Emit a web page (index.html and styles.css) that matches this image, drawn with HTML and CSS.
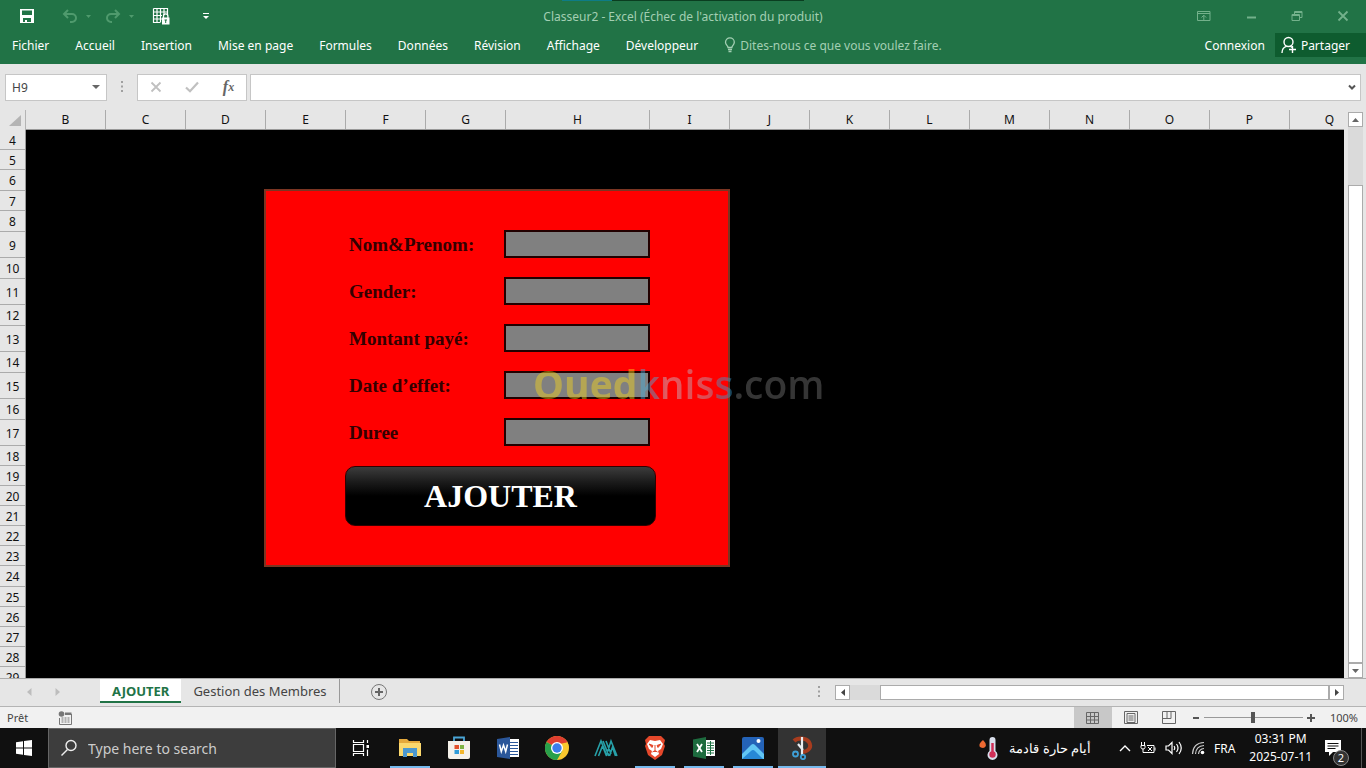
FILE: index.html
```
<!DOCTYPE html>
<html lang="fr">
<head>
    <meta charset="UTF-8">
    <meta name="viewport" content="width=device-width, initial-scale=1.0">
    <title>Classeur2 - Excel</title>
    <link rel="stylesheet" href="styles.css">
</head>
<body>
    <header class="titlebar">
        <div class="quick-access">
            <button class="save" aria-label="Enregistrer">
                <svg width="16" height="16" viewBox="0 0 16 16"><path fill="#fff" fill-rule="evenodd" d="M1 1h14v14H1zM3 2.500v4.500h10V2.500zM4 10v4h2v-2h2v2h4v-4z"/></svg>
            </button>
            <button class="undo" aria-label="Annuler">
                <svg width="30" height="16" viewBox="0 0 30 16"><path d="M6 2L2 6l4 4M2 6h8a3.500 3.500 0 0 1 0 8H8" fill="none" stroke="#4f9a6d" stroke-width="2"/><path d="M24 7h5l-2.500 3z" fill="#4f9a6d"/></svg>
            </button>
            <button class="redo" aria-label="Rétablir">
                <svg width="30" height="16" viewBox="0 0 30 16"><path d="M10 2l4 4-4 4M14 6H6a3.500 3.500 0 0 0 0 8h1" fill="none" stroke="#4f9a6d" stroke-width="2"/><path d="M24 7h5l-2.500 3z" fill="#4f9a6d"/></svg>
            </button>
            <button class="protect" aria-label="Protéger la feuille">
                <svg width="18" height="18" viewBox="0 0 18 18"><path d="M1.500 1.500h14v6M1.500 1.500v14h7M5 1v14M8.500 1v14M12 1v7M1 5h15M1 8.500h9M1 12h9" fill="none" stroke="#fff" stroke-width="1.200"/><rect x="10" y="10.500" width="7.500" height="7" fill="#fff"/><path d="M11.500 11V9a2.200 2.200 0 0 1 4.400 0v2" fill="none" stroke="#fff" stroke-width="1.300"/><path d="M12.500 13h2.500M13.700 13v3" stroke="#217346"/></svg>
            </button>
            <button class="customize" aria-label="Personnaliser">
                <svg width="8" height="8" viewBox="0 0 8 8"><path d="M1 1.500h6" stroke="#fff"/><path d="M1 4h6L4 7z" fill="#fff"/></svg>
            </button>
        </div>
        <h1 class="doc-title">Classeur2 - Excel (Échec de l'activation du produit)</h1>
        <div class="window-buttons">
            <button aria-label="Options du ruban">
                <svg width="14" height="12" viewBox="0 0 14 12"><path d="M.5 1.500h12.500v9H.5zM.5 3.500h12.500M6.800 10V5.500M4.500 7.500l2.300-2.300 2.300 2.300" fill="none" stroke="#73b18b"/></svg>
            </button>
            <button aria-label="Réduire">
                <svg width="12" height="12" viewBox="0 0 12 12"><path d="M2 7.500h9" stroke="#73b18b" stroke-width="2"/></svg>
            </button>
            <button aria-label="Restaurer">
                <svg width="12" height="12" viewBox="0 0 12 12"><path d="M1 4.500h7.500v6H1zM1 5.500h7.500M3.500 4V1.500H11v6H9M3.500 2.500H11" fill="none" stroke="#73b18b"/></svg>
            </button>
            <button aria-label="Fermer">
                <svg width="12" height="12" viewBox="0 0 12 12"><path d="M1.500 1.500l9 9M10.500 1.500l-9 9" stroke="#73b18b" stroke-width="1.800"/></svg>
            </button>
        </div>
    </header>

    <nav class="ribbon">
        <a href="#">Fichier</a>
        <a href="#">Accueil</a>
        <a href="#">Insertion</a>
        <a href="#">Mise en page</a>
        <a href="#">Formules</a>
        <a href="#">Données</a>
        <a href="#">Révision</a>
        <a href="#">Affichage</a>
        <a href="#">Développeur</a>
        <a href="#" class="tell-me">
            <svg width="12" height="16" viewBox="0 0 12 16"><path d="M4 10.500C4 8.500 1.500 8 1.500 5.200a4.400 4.400 0 0 1 8.800 0C10.300 8 7.900 8.500 7.900 10.500zM4 12.500h4M4.500 14.500h3" fill="none" stroke="#a3cfb3" stroke-width="1.300"/></svg>
            Dites-nous ce que vous voulez faire.
        </a>
        <a href="#" class="login">Connexion</a>
        <button class="share">
            <svg width="16" height="18" viewBox="0 0 16 18"><circle cx="7.500" cy="6" r="4.500" fill="none" stroke="#fff" stroke-width="1.400"/><path d="M1 17c0-4 2-6 4.500-6.700M9 10l2 1.500M8 13.500h7M11.500 10v7" fill="none" stroke="#fff" stroke-width="1.400"/></svg>
            Partager
        </button>
    </nav>

    <div class="formula-bar">
        <div class="name-box">
            <select aria-label="Zone Nom"><option>H9</option></select>
        </div>
        <svg class="dots" width="4" height="14" viewBox="0 0 4 14"><path d="M1 2h2M1 6.500h2M1 11h2" stroke="#a0a0a0" stroke-width="2"/></svg>
        <div class="formula-buttons">
            <button aria-label="Annuler la saisie">
                <svg width="12" height="12" viewBox="0 0 12 12"><path d="M1.500 1.500l9 9M10.500 1.500l-9 9" stroke="#c0c0c0" stroke-width="1.800"/></svg>
            </button>
            <button aria-label="Entrer">
                <svg width="14" height="12" viewBox="0 0 14 12"><path d="M1 6.500l4 3.800L13 1.500" fill="none" stroke="#c0c0c0" stroke-width="2.200"/></svg>
            </button>
            <button class="fx" aria-label="Insérer une fonction">f<sub>x</sub></button>
        </div>
        <div class="formula-input">
            <input type="text" aria-label="Barre de formule">
            <svg width="8" height="7" viewBox="0 0 8 7"><path d="M1 1.500l3 3 3-3" fill="none" stroke="#555" stroke-width="2"/></svg>
        </div>
    </div>

    <main class="workbook">
        <div class="corner"><svg width="13" height="12" viewBox="0 0 13 12"><path d="M12 0v11H0z" fill="#b4b4b4"/></svg></div>
        <div class="columns">
            <span>B</span><span>C</span><span>D</span><span>E</span><span>F</span><span>G</span><span class="wide">H</span><span>I</span><span>J</span><span>K</span><span>L</span><span>M</span><span>N</span><span>O</span><span>P</span><span>Q</span>
        </div>
        <div class="rows">
            <span>4</span><span>5</span><span class="mid">6</span><span>7</span><span class="mid">8</span><span class="tall">9</span><span class="mid">10</span><span class="tall">11</span><span class="mid">12</span><span class="tall">13</span><span class="mid">14</span><span class="tall">15</span><span class="mid">16</span><span class="tall">17</span><span>18</span><span>19</span><span>20</span><span>21</span><span>22</span><span>23</span><span class="mid">24</span><span>25</span><span>26</span><span>27</span><span>28</span><span>29</span>
        </div>
        <div class="cells">
            <form class="member-form">
                <label for="nom">Nom&amp;Prenom:</label>
                <input type="text" id="nom">
                <label for="gender">Gender:</label>
                <input type="text" id="gender">
                <label for="montant">Montant payé:</label>
                <input type="text" id="montant">
                <label for="date">Date d’effet:</label>
                <input type="text" id="date">
                <label for="duree">Duree</label>
                <input type="text" id="duree">
                <button type="button" class="add">AJOUTER</button>
            </form>
            <div class="watermark"><span class="oued">Oued</span><span class="kniss">kniss</span><span class="com">.com</span></div>
        </div>
        <div class="v-scroll">
            <button class="arrow" aria-label="Haut"><svg width="7" height="4" viewBox="0 0 7 4"><path d="M0 4h7L3.500 0z" fill="#666"/></svg></button>
            <div class="v-track"></div>
            <div class="v-thumb"></div>
            <button class="arrow" aria-label="Bas"><svg width="7" height="4" viewBox="0 0 7 4"><path d="M0 0h7L3.500 4z" fill="#666"/></svg></button>
        </div>
    </main>

    <div class="sheet-bar">
        <button class="prev" aria-label="Feuille précédente"><svg width="5" height="8" viewBox="0 0 5 8"><path d="M4.500 0v8L0 4z" fill="#bdbdbd"/></svg></button>
        <button class="next" aria-label="Feuille suivante"><svg width="5" height="8" viewBox="0 0 5 8"><path d="M.5 0v8L5 4z" fill="#bdbdbd"/></svg></button>
        <a href="#" class="sheet active">AJOUTER</a>
        <a href="#" class="sheet">Gestion des Membres</a>
        <button class="new-sheet" aria-label="Nouvelle feuille"><svg width="18" height="18" viewBox="0 0 18 18"><circle cx="9" cy="9" r="7.500" fill="none" stroke="#777"/><path d="M5 9h8M9 5v8" stroke="#666" stroke-width="2"/></svg></button>
        <div class="h-scroll">
            <svg class="dots" width="4" height="14" viewBox="0 0 4 14"><path d="M1 2h2M1 6.500h2M1 11h2" stroke="#a0a0a0" stroke-width="2"/></svg>
            <button class="arrow" aria-label="Gauche"><svg width="4" height="7" viewBox="0 0 4 7"><path d="M4 0v7L0 3.500z" fill="#444"/></svg></button>
            <div class="h-track"></div>
            <div class="h-thumb"></div>
            <button class="arrow" aria-label="Droite"><svg width="4" height="7" viewBox="0 0 4 7"><path d="M0 0v7l4-3.500z" fill="#444"/></svg></button>
        </div>
    </div>

    <footer class="status">
        <span>Prêt</span>
        <svg class="macro" width="14" height="14" viewBox="0 0 14 14"><circle cx="3.500" cy="3" r="2.800" fill="#777"/><path d="M7 1.500h6.500V4H7z" fill="#777"/><path d="M1.500 7v6.500h12V3" fill="none" stroke="#777"/><path d="M3.500 7h2M6.500 7h2M9.500 7h2M3.500 9h2M6.500 9h2M9.500 9h2M3.500 11h2M6.500 11h2M9.500 11h2" stroke="#777"/></svg>
        <div class="views">
            <button class="selected" aria-label="Normal"><svg width="14" height="14" viewBox="0 0 14 14"><path d="M.5 1.500h12v11H.5zM4.500 1.500v11M8.500 1.500v11M.5 5.500h12M.5 9h12" fill="none" stroke="#666"/></svg></button>
            <button aria-label="Mise en page"><svg width="14" height="14" viewBox="0 0 14 14"><path d="M.5.5h13v12H.5zM3 2.500h8v9H3zM4.500 5h5M4.500 7h5M4.500 9h5" fill="none" stroke="#666"/></svg></button>
            <button aria-label="Aperçu des sauts de page"><svg width="14" height="14" viewBox="0 0 14 14"><path d="M.5.5h13v12H.5zM5 .5v7M9 .5v7M.5 7.500H9" fill="none" stroke="#666"/></svg></button>
        </div>
        <button class="zoom-step" aria-label="Zoom arrière"><svg width="8" height="8" viewBox="0 0 8 8"><path d="M1 4h6" stroke="#555" stroke-width="2"/></svg></button>
        <input type="range" class="zoom" min="0" max="100" value="50" aria-label="Zoom">
        <button class="zoom-step" aria-label="Zoom avant"><svg width="8" height="8" viewBox="0 0 8 8"><path d="M0 4h8M4 0v8" stroke="#555" stroke-width="2"/></svg></button>
        <span class="percent">100%</span>
    </footer>

    <div class="taskbar">
        <button class="start" aria-label="Démarrer"><svg width="16" height="16" viewBox="0 0 16 16"><path d="M0 2.300L7 1.300V7.500H0zM8 1.100L16 0V7.500H8zM0 8.500h7v6.200l-7-1zM8 8.500h8V16l-8-1.100z" fill="#fff"/></svg></button>
        <label class="search">
            <svg width="18" height="18" viewBox="0 0 18 18"><circle cx="11" cy="6.500" r="5" fill="none" stroke="#eee" stroke-width="1.400"/><path d="M7.500 10.500L1.500 16.500" stroke="#eee" stroke-width="1.400"/></svg>
            <input type="text" placeholder="Type here to search" aria-label="Type here to search">
        </label>
        <div class="apps">
            <button aria-label="Affichage des tâches"><svg width="18" height="18" viewBox="0 0 18 18"><path d="M1.500 1v2.500h10V1M1.500 17v-2.500h10V17M1.500 5.500h10v7h-10zM15.500 1v3M15.500 10.500V17" fill="none" stroke="#fff" stroke-width="1.200"/><path d="M14.500 6h2.500v3h-2.500z" fill="#fff"/></svg></button>
            <button class="running" aria-label="Explorateur de fichiers"><svg width="24" height="24" viewBox="0 0 24 24"><path d="M1 3h8l2 2h11v15H1z" fill="#e5a93c"/><path d="M1 7h22v13H1z" fill="#fbd86d"/><path d="M5 12h14v9h-4v-4H9v4H5z" fill="#4c98cf"/></svg></button>
            <button aria-label="Microsoft Store"><svg width="24" height="24" viewBox="0 0 24 24"><path d="M7 6V1.500h10V6" fill="none" stroke="#4aa5d6" stroke-width="1.800"/><path d="M1 5h22v16q0 2-2 2H3q-2 0-2-2z" fill="#f4f1ea"/><path d="M7.500 9H12v4H7.500z" fill="#e2502b"/><path d="M13 9h4v4h-4z" fill="#7db343"/><path d="M7.500 14H12v4H7.500z" fill="#2f9bd8"/><path d="M13 14h4v4h-4z" fill="#f3b72d"/></svg></button>
            <button aria-label="Word"><svg width="24" height="24" viewBox="0 0 24 24"><path d="M12 3h11v18H12z" fill="#fff"/><path d="M14 6.500h8M14 9.500h8M14 12.500h8M14 15.500h8M14 18.500h8" stroke="#2b579a"/><path d="M1 3L14 1v22L1 21z" fill="#2b579a"/><path d="M3.500 8.500l1.800 7L7.500 9l2.200 6.500 1.800-7" fill="none" stroke="#fff" stroke-width="1.500"/></svg></button>
            <button aria-label="Chrome"><svg width="24" height="24" viewBox="0 0 24 24"><circle cx="12" cy="12" r="12" fill="#f9c82e"/><path d="M1.600 6A12 12 0 0 1 22.400 6L12 12z" fill="#df3e30"/><path d="M22.400 6.500H12v3h11.800z" fill="#f9c82e"/><path d="M22.400 6H12v3z" fill="#df3e30"/><path d="M1.600 6A12 12 0 0 0 12 24l5.200-9L12 12z" fill="#28a04b"/><circle cx="12" cy="12" r="6" fill="#fff"/><circle cx="12" cy="12" r="4.700" fill="#3b7ded"/></svg></button>
            <button aria-label="Maya"><svg width="24" height="24" viewBox="0 0 24 24"><path d="M1 20L7 5l6 15M4.500 20L8.500 10l4 10M9 5l6 15M12 5l5 13M12.500 19L17 5l6 15M15.500 20L18.500 11l3 9" fill="none" stroke="#27a0a8" stroke-width="1.600"/></svg></button>
            <button class="running" aria-label="Brave"><svg width="24" height="24" viewBox="0 0 24 24"><path d="M6 0h12l4 4-1 4 1 2-3 9-7 5-7-5-3-9 1-2-1-4z" fill="#e5482b"/><path d="M7 4l5 1 5-1 3 4-2 5-3 2 1 3-4 3-4-3 1-3-3-2-2-5z" fill="#fff"/><path d="M6 8l4 1.500-1 2zM18 8l-4 1.500 1 2zM12 9v5M9.500 16l2.500-1.500 2.500 1.500" fill="#e5482b" stroke="#e5482b"/></svg></button>
            <button class="running" aria-label="Excel"><svg width="24" height="24" viewBox="0 0 24 24"><path d="M12 4h11v16H12z" fill="#fff"/><path d="M15 7h7M15 9.500h7M15 12h7M15 14.500h7M15 17h7M18.500 5v14" stroke="#217346"/><path d="M1 3.500L14 1v22L1 20.500z" fill="#1d6b3e"/><path d="M5 8l5 8M10 8l-5 8" fill="none" stroke="#fff" stroke-width="1.800"/></svg></button>
            <button class="running" aria-label="Photos"><svg width="24" height="24" viewBox="0 0 24 24"><rect x="1" y="1" width="22" height="22" rx="2" fill="#2463b8"/><path d="M1 18l9-9q2-2 4 0l9 9v5H1z" fill="#61c6f4"/><path d="M1 23l9-8q2-2 4 0l8 8z" fill="#2788d5"/><circle cx="17.500" cy="5" r="2" fill="#fff"/></svg></button>
            <button class="running current" aria-label="Outil Capture"><svg width="24" height="24" viewBox="0 0 24 24"><path d="M4 5c4-4 12-3 15 1 3 5 0 9-6 10" fill="none" stroke="#a83c1e" stroke-width="4"/><path d="M12 1v18M13 14l-5-6" stroke="#e9edf0" stroke-width="2.200"/><circle cx="5.500" cy="18" r="2.500" fill="none" stroke="#3fa0d8" stroke-width="1.800"/><circle cx="13" cy="21" r="2.200" fill="none" stroke="#3fa0d8" stroke-width="1.800"/></svg></button>
        </div>
        <div class="tray">
            <button class="weather">
                <svg width="20" height="24" viewBox="0 0 20 24"><path d="M4 4q4 4 2.500 6.500T1 11Q-1 8 4 4z" fill="#ee6a32"/><path d="M10.500 4a3 3 0 0 1 6 0v11a5 5 0 1 1-6 0z" fill="#d9dfec"/><path d="M13.500 7v10" stroke="#cf2f57" stroke-width="2.500"/><circle cx="13.500" cy="18.500" r="3.200" fill="#cf2f57"/></svg>
                <span lang="ar" dir="rtl">أيام حارة قادمة</span>
            </button>
            <button aria-label="Icônes cachées"><svg width="12" height="8" viewBox="0 0 12 8"><path d="M1 7l5-5 5 5" fill="none" stroke="#fff" stroke-width="1.400"/></svg></button>
            <button aria-label="Batterie"><svg width="16" height="14" viewBox="0 0 16 14"><path d="M1.500 1v3M4.500 1v3M1 4.500h4v2Q5 8 3 8T1 6.500zM3 8v3.500h3M7 4.500h7v7H6M15 6.500v3M8 6l4 4M12 6l-4 4" fill="none" stroke="#fff"/></svg></button>
            <button aria-label="Volume"><svg width="17" height="14" viewBox="0 0 17 14"><path d="M1 5h2.500L7 1.500v11L3.500 9H1zM9 5q1.500 2 0 4M11.500 3q3 4 0 8M14 1q4.500 6 0 12" fill="none" stroke="#fff" stroke-width="1.200"/></svg></button>
            <button aria-label="Réseau"><svg width="14" height="14" viewBox="0 0 14 14"><path d="M1.500 13Q2 2 13 1.500M4.500 13Q5 5 13 4.500M7.500 13Q8 8 13 7.500" fill="none" stroke="#ccc" stroke-width="1.200"/><circle cx="11.500" cy="11.500" r="1.800" fill="#fff"/></svg></button>
            <span class="lang">FRA</span>
            <div class="clock">
                <time>03:31 PM</time>
                <time>2025-07-11</time>
            </div>
            <button class="notices" aria-label="Notifications">
                <svg width="16" height="17" viewBox="0 0 16 17"><path d="M0 0h16v12H8l-4 4v-4H0z" fill="#fff"/><path d="M2.500 3.500h11M2.500 6h11M2.500 8.500h8" stroke="#101010" stroke-width="1.200"/></svg>
                <span class="badge">2</span>
            </button>
        </div>
    </div>
</body>
</html>
```

FILE: styles.css
```
* {
    margin: 0;
    padding: 0;
    box-sizing: border-box;
}

body {
    display: flex;
    flex-direction: column;
    height: 100vh;
    overflow: hidden;
    background: #e6e6e6;
    color: #444;
    font-family: 'Noto Sans', 'Open Sans', sans-serif;
    font-size: 12px;
}

button, input, select {
    border: 0;
    outline: 0;
    background: none;
    color: inherit;
    font: inherit;
}

button {
    display: flex;
    align-items: center;
    justify-content: center;
}

a {
    color: inherit;
    text-decoration: none;
}

svg {
    display: block;
    flex-shrink: 0;
}

/* Title bar */
.titlebar {
    position: relative;
    display: grid;
    grid-template-columns: 1fr auto 1fr;
    align-items: center;
    height: 32px;
    background: #217346;
}

.titlebar::before {
    content: '';
    position: absolute;
    top: 0;
    left: 50%;
    width: 242px;
    height: 1px;
    margin-left: -121px;
    background: linear-gradient(to right, #0e7c86 50px, #0a3d20 50px);
}

.quick-access {
    display: flex;
    align-items: center;
    padding-left: 19px;
}

.undo {
    margin-left: 27px;
}

.redo {
    margin-left: 13px;
}

.protect {
    margin-left: 17px;
}

.customize {
    margin-left: 32px;
}

.doc-title {
    color: #a3cfb3;
    font-size: 12px;
    font-weight: 400;
}

.window-buttons {
    display: flex;
    justify-content: flex-end;
    gap: 34px;
    padding-right: 17px;
}

/* Ribbon tabs */
.ribbon {
    display: flex;
    align-items: center;
    gap: 26px;
    height: 32px;
    padding: 0 0 6px 12px;
    background: #217346;
    color: #fff;
}

.tell-me {
    display: flex;
    align-items: center;
    gap: 4px;
    color: #a3cfb3;
}

.login {
    margin-left: auto;
}

.share {
    gap: 4px;
    height: 24px;
    margin-left: -16px;
    padding: 0 16px 0 6px;
    background: #0e5c2f;
}

/* Formula bar */
.formula-bar {
    display: flex;
    align-items: center;
    height: 46px;
    padding: 0 5px;
}

.name-box,
.formula-buttons,
.formula-input {
    display: flex;
    align-items: center;
    height: 27px;
    border: 1px solid #c6c6c6;
    background: #fff;
}

.name-box {
    position: relative;
    width: 102px;
}

.name-box select {
    width: 100%;
    height: 100%;
    padding-left: 6px;
    appearance: none;
}

.name-box::after {
    content: '';
    position: absolute;
    right: 6px;
    border: 4px solid transparent;
    border-top-color: #666;
    border-bottom: 0;
    pointer-events: none;
}

.dots {
    margin: 0 13px;
}

.formula-buttons {
    width: 110px;
    justify-content: space-around;
}

.fx {
    color: #666;
    font-family: 'Liberation Serif', serif;
    font-size: 16px;
    font-style: italic;
    font-weight: 700;
}

.fx sub {
    font-size: 12px;
}

.formula-input {
    flex: 1;
    margin-left: 3px;
    padding-right: 4px;
}

.formula-input input {
    flex: 1;
    height: 100%;
    padding: 0 6px;
}

/* Worksheet */
.workbook {
    display: grid;
    grid-template-columns: 26px minmax(0, 1fr) 22px;
    grid-template-rows: 20px minmax(0, 1fr);
    flex: 1;
    min-height: 0;
    color: #111;
}

.corner {
    display: flex;
    align-items: flex-end;
    justify-content: flex-end;
    padding: 0 3px 3px 0;
    border-right: 1px solid #b4b4b4;
}

.columns {
    display: flex;
    overflow: hidden;
    border-bottom: 1px solid #999;
}

.columns span {
    flex: 0 0 80px;
    border-right: 1px solid #ababab;
    line-height: 20px;
    text-align: center;
}

.columns .wide {
    flex-basis: 144px;
}

.rows {
    grid-row: 2;
    overflow: hidden;
    border-right: 1px solid #999;
}

.rows span {
    display: block;
    height: 20px;
    border-bottom: 1px solid #ababab;
    line-height: 22px;
    text-align: center;
}

.rows .mid {
    height: 21px;
}

.rows .tall {
    height: 26px;
    line-height: 28px;
}

.cells {
    position: relative;
    overflow: hidden;
    background: #000;
}

.member-form {
    display: grid;
    grid-template-columns: 159px 146px;
    grid-auto-rows: 28px;
    row-gap: 19px;
    align-content: start;
    width: 466px;
    height: 378px;
    margin: 59px 0 0 238px;
    padding: 39px 0 0 79px;
    border: 2px solid #7b3522;
    background: #f00;
}

.member-form label {
    padding-left: 4px;
    color: #300;
    font-family: 'Liberation Serif', serif;
    font-size: 19px;
    font-weight: 700;
    line-height: 30px;
}

.member-form input {
    border: 2px solid #200;
    background: #808080;
}

.add {
    width: 311px;
    height: 60px;
    margin-top: 1px;
    border: 1px solid #300;
    border-radius: 10px;
    background: linear-gradient(#3c3c3c, #1c1c1c 25%, #000 50%);
    color: #fff;
    font-family: 'Liberation Serif', serif;
    font-size: 32px;
    font-weight: 700;
}

.watermark {
    position: absolute;
    top: 226px;
    left: 507px;
    font-family: 'Open Sans', 'Noto Sans', sans-serif;
    font-size: 39px;
    font-weight: 600;
    line-height: 56px;
    opacity: 0.45;
    pointer-events: none;
}

.oued {
    color: #f7d51d;
    font-weight: 700;
}

.kniss {
    background: linear-gradient(to right, #4bb0dc 20%, #c8c8d4 30%, #b4a8b8 75%, #3d9ccd 85%);
    background-clip: text;
    color: transparent;
}

.com {
    color: #777;
}

/* Scrollbars */
.v-scroll {
    grid-column: 3;
    grid-row: 1 / 3;
    display: flex;
    flex-direction: column;
    width: 15px;
    margin: 2px 0 0 4px;
}

.arrow {
    flex: none;
    width: 15px;
    height: 15px;
    border: 1px solid #ababab;
    background: #fff;
}

.v-track {
    flex: 58;
    background: #dadada;
}

.v-thumb {
    flex: 479;
    border: 1px solid #ababab;
    background: #fff;
}

/* Sheet tabs */
.sheet-bar {
    display: flex;
    align-items: flex-start;
    height: 29px;
    border-top: 1px solid #ababab;
    border-bottom: 1px solid #b4b4b4;
}

.prev,
.next,
.new-sheet {
    height: 26px;
}

.prev {
    margin-left: 27px;
}

.next {
    margin-left: 23px;
}

.sheet {
    height: 24px;
    padding: 0 12px;
    font-size: 13px;
    line-height: 25px;
}

.sheet.active {
    margin-left: 40px;
    border-bottom: 2px solid #217346;
    background: #fff;
    color: #217346;
    font-weight: 700;
}

.sheet:not(.active) {
    border-right: 1px solid #999;
}

.new-sheet {
    margin-left: 30px;
}

.h-scroll {
    display: flex;
    align-items: center;
    width: 527px;
    height: 26px;
    margin: 0 22px 0 auto;
}

.h-scroll .dots {
    margin: 0 14px 0 0;
}

.h-track {
    flex: 30;
    height: 15px;
    background: #dadada;
}

.h-thumb {
    flex: 449;
    height: 15px;
    border: 1px solid #ababab;
    background: #fff;
}

/* Status bar */
.status {
    display: flex;
    align-items: center;
    height: 21px;
    padding: 0 8px 0 7px;
    background: #f1f1f1;
    font-size: 11px;
}

.macro {
    margin-left: 30px;
}

.views {
    display: flex;
    height: 100%;
    margin-left: auto;
}

.views button {
    width: 38px;
}

.views .selected {
    background: #c8c8c8;
}

.zoom-step {
    width: 16px;
}

.zoom {
    width: 99px;
    height: 12px;
    appearance: none;
    background: linear-gradient(#999, #999) center / 100% 1px no-repeat;
}

.zoom::-webkit-slider-thumb {
    width: 4px;
    height: 11px;
    appearance: none;
    background: #555;
}

.percent {
    margin-left: 11px;
}

/* Windows taskbar */
.taskbar {
    display: flex;
    height: 40px;
    background: #101010;
    color: #fff;
}

.start {
    width: 48px;
}

.search {
    display: flex;
    align-items: center;
    gap: 10px;
    width: 288px;
    padding-left: 11px;
    border: 1px solid #666;
    background: #3d3d3d;
    font-size: 14px;
}

.search input {
    flex: 1;
    min-width: 0;
}

.search input::placeholder {
    color: #ccc;
    opacity: 1;
}

.apps {
    display: flex;
    gap: 1px;
    padding-left: 1px;
}

.apps button {
    position: relative;
    width: 48px;
}

.running::after {
    content: '';
    position: absolute;
    bottom: 0;
    left: 4px;
    right: 4px;
    height: 2px;
    background: #76b9ed;
}

.apps .current {
    background: #333;
}

.current::after {
    left: 0;
    right: 0;
}

.tray {
    display: flex;
    align-items: center;
    gap: 9px;
    margin-left: auto;
    margin-right: 4px;
    padding-right: 16px;
    border-right: 1px solid #555;
}

.weather {
    gap: 10px;
    margin-right: 19px;
    font-size: 13px;
}

.clock {
    display: flex;
    flex-direction: column;
    align-items: center;
    margin-left: 5px;
    line-height: 18px;
}

.notices {
    position: relative;
    width: 24px;
    height: 24px;
}

.badge {
    position: absolute;
    right: -4px;
    bottom: -6px;
    width: 16px;
    height: 16px;
    border: 1px solid #888;
    border-radius: 50%;
    background: #333;
    font-size: 11px;
    line-height: 14px;
}
```
